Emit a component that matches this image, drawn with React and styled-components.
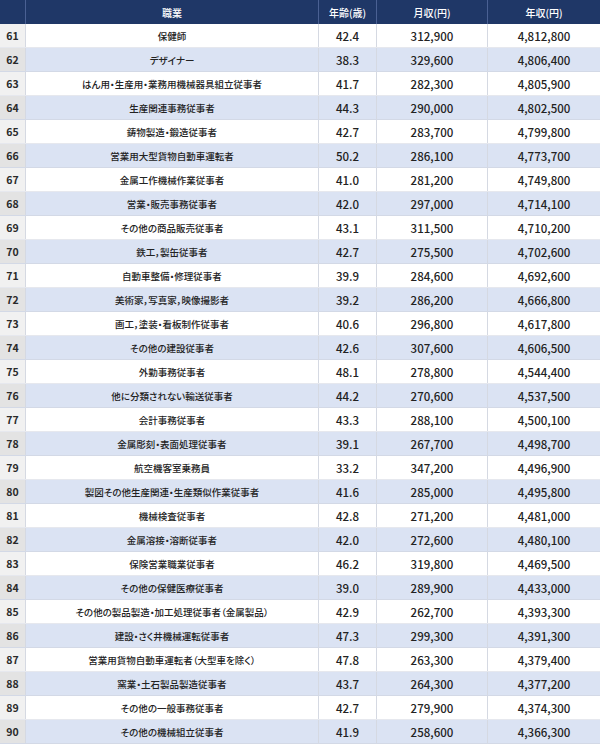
import React from "react";
import styled, { createGlobalStyle } from "styled-components";

const rows = [
  [61, "保健師", "42.4", "312,900", "4,812,800"],
  [62, "デザイナー", "38.3", "329,600", "4,806,400"],
  [63, "はん用・生産用・業務用機械器具組立従事者", "41.7", "282,300", "4,805,900"],
  [64, "生産関連事務従事者", "44.3", "290,000", "4,802,500"],
  [65, "鋳物製造・鍛造従事者", "42.7", "283,700", "4,799,800"],
  [66, "営業用大型貨物自動車運転者", "50.2", "286,100", "4,773,700"],
  [67, "金属工作機械作業従事者", "41.0", "281,200", "4,749,800"],
  [68, "営業・販売事務従事者", "42.0", "297,000", "4,714,100"],
  [69, "その他の商品販売従事者", "43.1", "311,500", "4,710,200"],
  [70, "鉄工，製缶従事者", "42.7", "275,500", "4,702,600"],
  [71, "自動車整備・修理従事者", "39.9", "284,600", "4,692,600"],
  [72, "美術家，写真家，映像撮影者", "39.2", "286,200", "4,666,800"],
  [73, "画工，塗装・看板制作従事者", "40.6", "296,800", "4,617,800"],
  [74, "その他の建設従事者", "42.6", "307,600", "4,606,500"],
  [75, "外勤事務従事者", "48.1", "278,800", "4,544,400"],
  [76, "他に分類されない輸送従事者", "44.2", "270,600", "4,537,500"],
  [77, "会計事務従事者", "43.3", "288,100", "4,500,100"],
  [78, "金属彫刻・表面処理従事者", "39.1", "267,700", "4,498,700"],
  [79, "航空機客室乗務員", "33.2", "347,200", "4,496,900"],
  [80, "製図その他生産関連・生産類似作業従事者", "41.6", "285,000", "4,495,800"],
  [81, "機械検査従事者", "42.8", "271,200", "4,481,000"],
  [82, "金属溶接・溶断従事者", "42.0", "272,600", "4,480,100"],
  [83, "保険営業職業従事者", "46.2", "319,800", "4,469,500"],
  [84, "その他の保健医療従事者", "39.0", "289,900", "4,433,000"],
  [85, "その他の製品製造・加工処理従事者（金属製品）", "42.9", "262,700", "4,393,300"],
  [86, "建設・さく井機械運転従事者", "47.3", "299,300", "4,391,300"],
  [87, "営業用貨物自動車運転者（大型車を除く）", "47.8", "263,300", "4,379,400"],
  [88, "窯業・土石製品製造従事者", "43.7", "264,300", "4,377,200"],
  [89, "その他の一般事務従事者", "42.7", "279,900", "4,374,300"],
  [90, "その他の機械組立従事者", "41.9", "258,600", "4,366,300"],
];

export default function App() {
  return (
    <>
      <GlobalStyle />
      <Table>
        <HeaderRow>
          <HeadCell />
          <HeadCell>職業</HeadCell>
          <HeadCell>年齢(歳)</HeadCell>
          <HeadCell>月収(円)</HeadCell>
          <HeadCell>年収(円)</HeadCell>
        </HeaderRow>
        {rows.map(([rank, job, age, month, year], i) => (
          <Row key={rank} $alt={i % 2 === 1}>
            <RankCell $alt={i % 2 === 1}>{rank}</RankCell>
            <JobCell>{job}</JobCell>
            <NumCell>{age}</NumCell>
            <NumCell>{month}</NumCell>
            <NumCell>{year}</NumCell>
          </Row>
        ))}
      </Table>
    </>
  );
}

const GlobalStyle = createGlobalStyle`
  body {
    margin: 0;
    background: #ffffff;
    font-family: "Noto Sans CJK JP", "Noto Sans", sans-serif;
    color: #222;
  }
`;

const Table = styled.div`
  width: 600px;
  display: flex;
  flex-direction: column;
`;

const grid = `
  display: grid;
  grid-template-columns: 26px 293px 58px 111px 1fr;
  height: 24px;
`;

const HeaderRow = styled.div`
  ${grid}
  background-color: #1f3767;
`;

const HeadCell = styled.div`
  display: flex;
  align-items: center;
  justify-content: center;
  color: #ffffff;
  font-size: 10px;
  font-weight: 500;
  font-feature-settings: "palt";
  border-right: 1px solid #4a6093;
  &:last-child {
    border-right: none;
  }
`;

const Row = styled.div`
  ${grid}
  background-color: ${(p) => (p.$alt ? "#dbe3f3" : "#ffffff")};
  box-sizing: border-box;
  border-bottom: 1px solid ${(p) => (p.$alt ? "#d3d9e6" : "#e6e8ee")};
`;

const Cell = styled.div`
  display: flex;
  align-items: center;
  justify-content: center;
  border-right: 1px solid #d5d9e2;
  &:last-child {
    border-right: none;
  }
`;

const RankCell = styled(Cell)`
  background-color: ${(p) => (p.$alt ? "#e3e3e3" : "#f1f1f1")};
  font-size: 10.5px;
  font-weight: 700;
  color: #2a2a2a;
`;

const JobCell = styled(Cell)`
  font-size: 9.5px;
  font-weight: 500;
  font-feature-settings: "palt";
  white-space: nowrap;
`;

const NumCell = styled(Cell)`
  font-size: 11.5px;
  font-weight: 500;
  color: #222;
`;
